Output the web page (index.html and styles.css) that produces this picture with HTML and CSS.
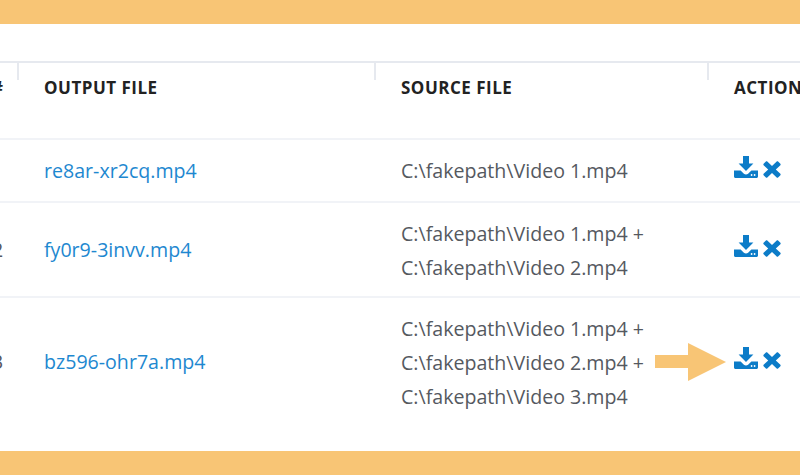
FILE: index.html
```html
<!DOCTYPE html>
<html lang="en">
<head>
<meta charset="utf-8">
<title>Output files</title>
<link rel="stylesheet" href="styles.css">
</head>
<body>
<svg class="defs" width="0" height="0" aria-hidden="true">
  <symbol id="dl" viewBox="0 0 24 22">
    <path d="M9 0h6v7.5h4.4L12 15 4.6 7.5H9z"/>
    <path d="M0 14.5h6.6l3.3 3.2c1.2 1.1 3 1.1 4.2 0l3.3-3.2H24v6c0 .8-.7 1.5-1.5 1.5h-21C.7 22 0 21.300 0 20.500z"/>
    <circle class="dot" cx="17.600" cy="19" r=".9"/>
    <circle class="dot" cx="20.600" cy="19" r=".9"/>
  </symbol>
  <symbol id="x" viewBox="0 0 18 17">
    <path d="M4.300.6 9 5.100 13.700.6c.4-.4 1-.4 1.400 0l2.300 2.200c.4.4.4 1 0 1.400L12.800 8.500l4.600 4.300c.4.4.4 1 0 1.400l-2.300 2.200c-.4.4-1 .4-1.400 0L9 11.900l-4.700 4.500c-.4.4-1 .4-1.400 0L.6 14.200c-.4-.4-.4-1 0-1.400l4.600-4.300L.6 4.200c-.4-.4-.4-1 0-1.400L2.900.6c.4-.4 1-.4 1.400 0z"/>
  </symbol>
</svg>
<div class="band"></div>
<main class="panel">
  <table class="files">
    <colgroup>
      <col class="c-num"><col class="c-out"><col class="c-src"><col class="c-act">
    </colgroup>
    <thead>
      <tr><th>#</th><th>Output file</th><th>Source file</th><th>Actions</th></tr>
    </thead>
    <tbody>
      <tr class="single">
        <td class="num">1</td>
        <td class="name"><a href="#">re8ar-xr2cq.mp4</a></td>
        <td class="src">C:\fakepath\Video 1.mp4</td>
        <td><span class="icons"><svg class="i-dl"><use href="#dl"/></svg><svg class="i-x"><use href="#x"/></svg></span></td>
      </tr>
      <tr>
        <td class="num">2</td>
        <td class="name"><a href="#">fy0r9-3invv.mp4</a></td>
        <td>C:\fakepath\Video 1.mp4 +<br>C:\fakepath\Video 2.mp4</td>
        <td><span class="icons"><svg class="i-dl"><use href="#dl"/></svg><svg class="i-x"><use href="#x"/></svg></span></td>
      </tr>
      <tr>
        <td class="num">3</td>
        <td class="name"><a href="#">bz596-ohr7a.mp4</a></td>
        <td>C:\fakepath\Video 1.mp4 +<br>C:\fakepath\Video 2.mp4 +<br>C:\fakepath\Video 3.mp4</td>
        <td><span class="icons"><svg class="i-dl"><use href="#dl"/></svg><svg class="i-x"><use href="#x"/></svg></span></td>
      </tr>
    </tbody>
  </table>
  <svg class="arrow" viewBox="0 0 71 38" aria-hidden="true"><path d="M0 12h33V0l38 19-38 19V25H0z"/></svg>
</main>
<div class="band"></div>
</body>
</html>
```

FILE: styles.css
```css
* { box-sizing: border-box; }
html, body { margin: 0; padding: 0; }
body {
  width: 800px;
  height: 475px;
  overflow: hidden;
  background: #fff;
  font-family: "Open Sans", "Liberation Sans", sans-serif;
  color: #55595f;
}
.defs { display: block; width: 0; height: 0; }
.band { height: 24px; background: #f8c575; }
.panel {
  position: relative;
  height: 427px;
  padding-top: 37px;
  overflow: hidden;
}
.files {
  margin-left: -20px;
  width: 920px;
  table-layout: fixed;
  border-collapse: collapse;
  border-top: 2px solid #e6e9ef;
}
.c-num { width: 38px; }
.c-out { width: 357px; }
.c-src { width: 333px; }
.c-act { width: 192px; }
th {
  position: relative;
  height: 77px;
  padding: 0 0 26px 26px;
  text-align: left;
  font-size: 17px;
  font-weight: 700;
  letter-spacing: .5px;
  text-transform: uppercase;
  color: #222;
  border-bottom: 2px solid #f1f3f7;
}
th + th::before {
  content: "";
  position: absolute;
  left: -1px;
  top: 0;
  width: 2px;
  height: 17px;
  background: #e6e9ef;
}
td {
  padding: 14px 0 11px 26px;
  font-size: 19.6px;
  line-height: 34px;
  vertical-align: middle;
  border-bottom: 2px solid #f1f3f7;
}
td.name, td.src, td.num { padding-top: 13px; padding-bottom: 12px; }
th:first-child, td.num { padding-left: 12px; }
.single td { height: 63px; }
tbody tr:last-child td { border-bottom: 0; }
a { color: #1e88d0; text-decoration: none; }
.icons { display: flex; align-items: flex-end; gap: 5px; margin-bottom: 10px; }
.i-dl { width: 24px; height: 22px; fill: #0c7cc8; }
.i-x { width: 18px; height: 17px; fill: #0c7cc8; }
.dot { fill: #fff; }
.arrow {
  position: absolute;
  left: 655px;
  top: 319px;
  width: 71px;
  height: 38px;
  fill: #f8c575;
}
```
